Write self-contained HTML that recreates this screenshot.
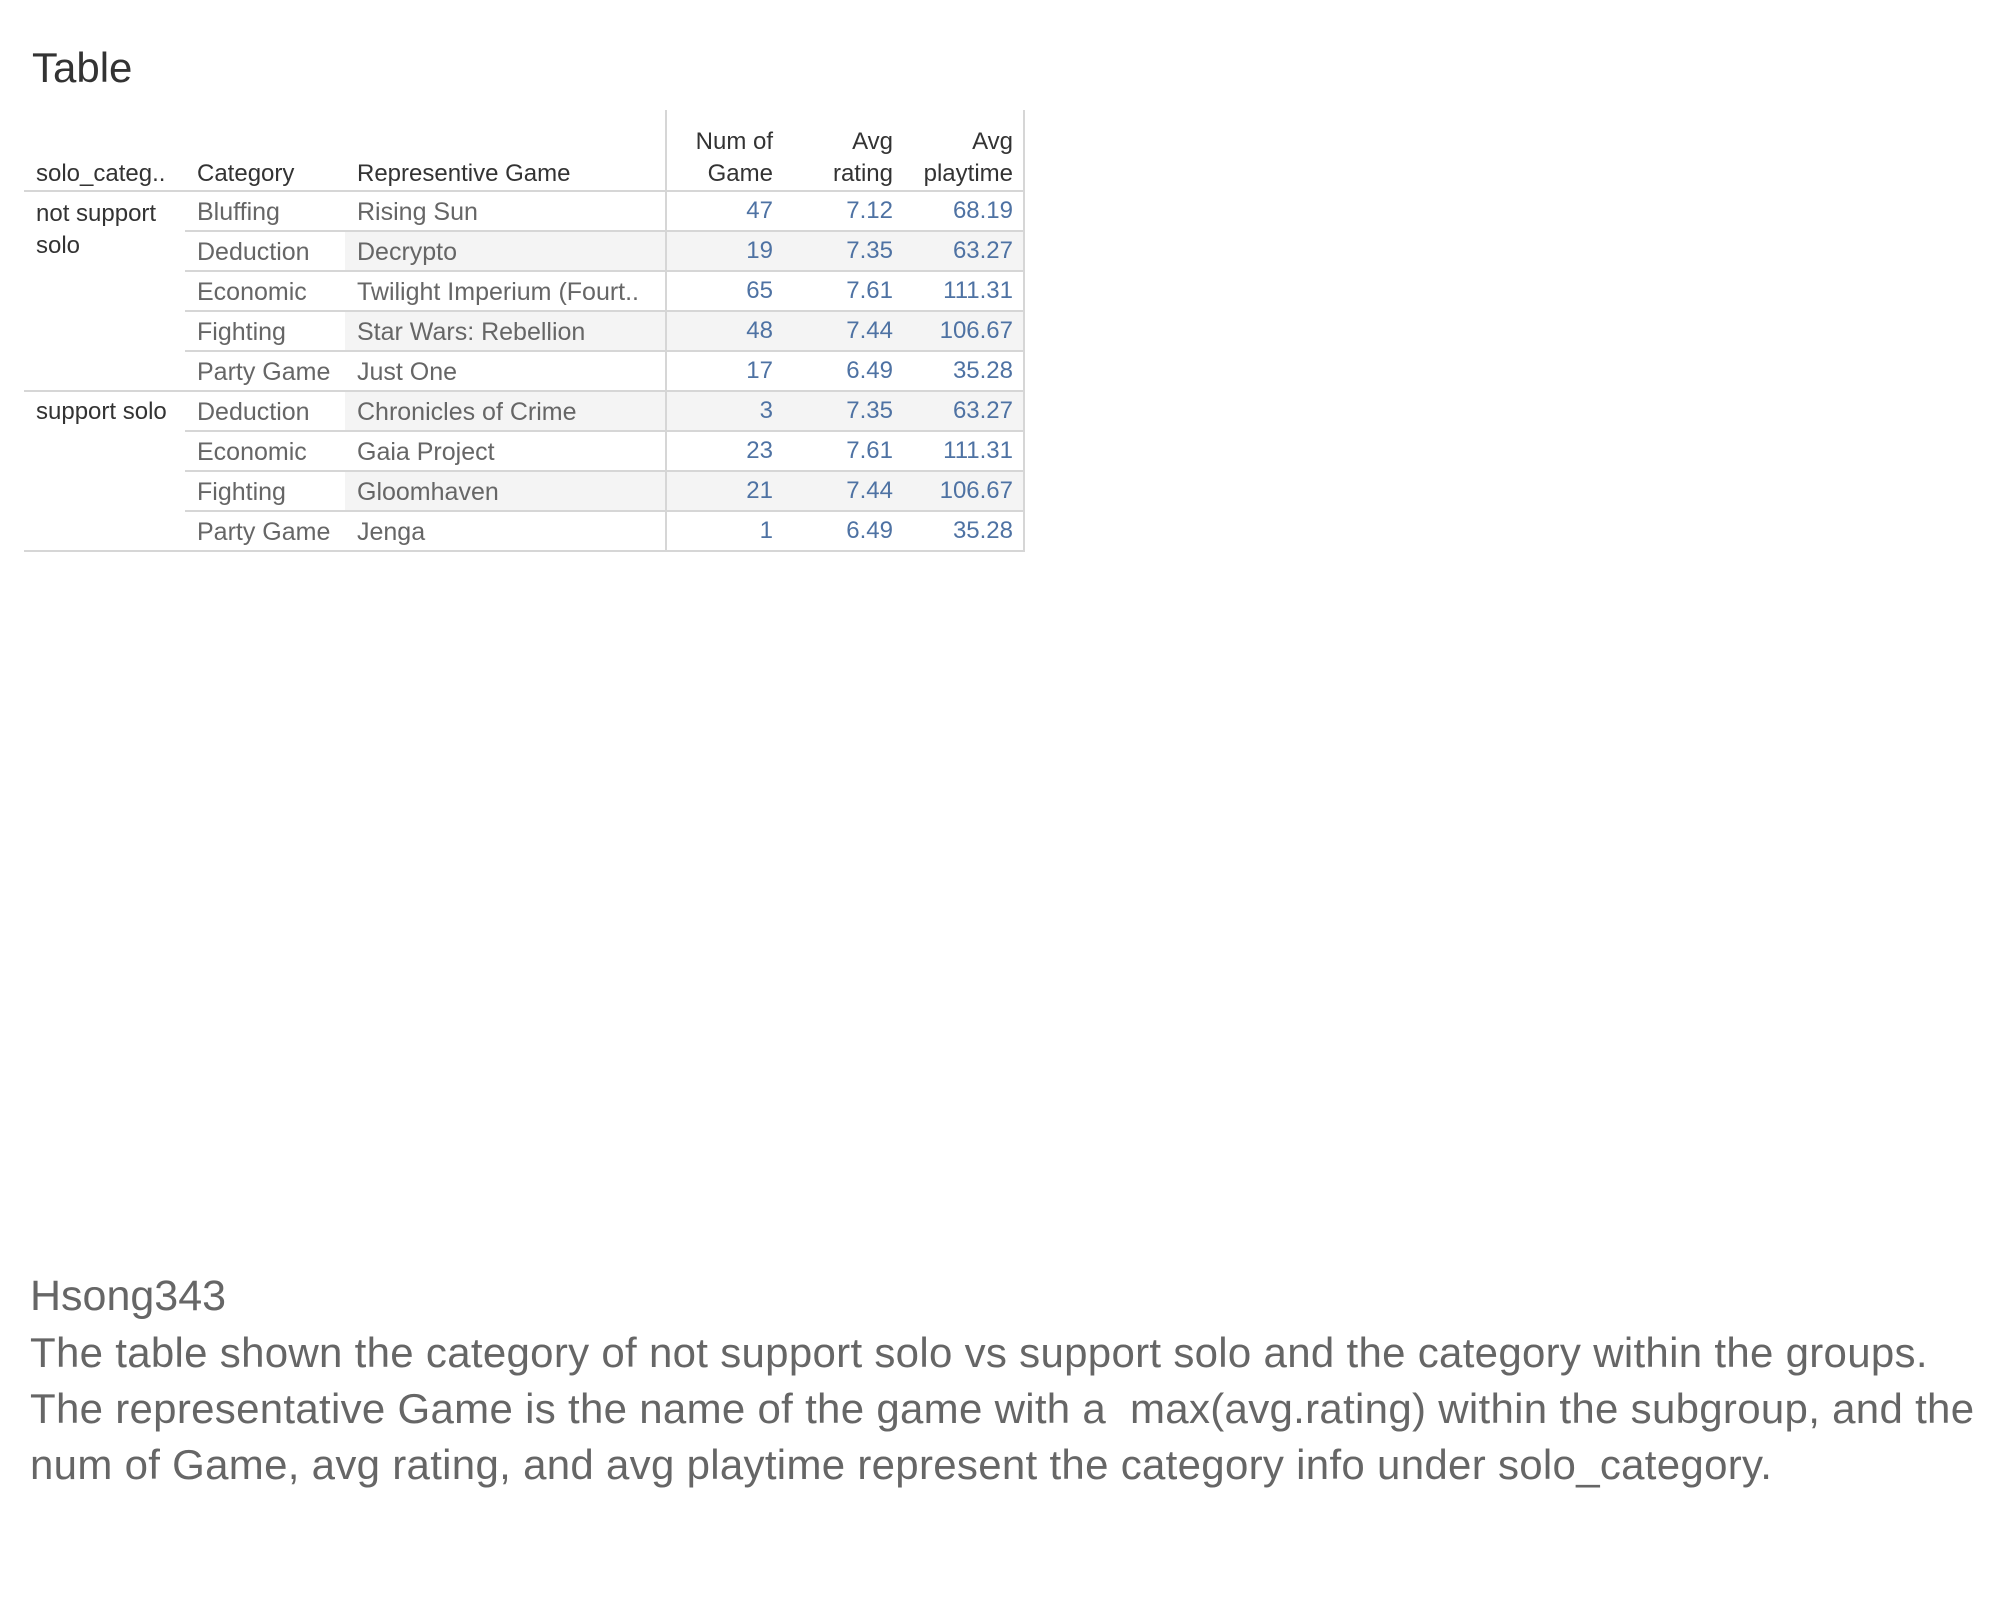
<!DOCTYPE html>
<html><head><meta charset="utf-8"><style>
body{margin:0;width:2000px;height:1600px;background:#fff;position:relative;font-family:"Liberation Sans",sans-serif;overflow:hidden}
.a{position:absolute;white-space:nowrap}
.t{font-size:24px;line-height:24px}
.h{color:#333}
.c{color:#666;font-size:25px}
.n{color:#4e72a3;text-align:right}
.hl{position:absolute;height:2px;background:#d6d6d6}
.vl{position:absolute;width:2px;background:#d6d6d6}
.sh{position:absolute;background:#f4f4f4}
</style></head><body>
<div class="a" style="left:32px;top:44px;font-size:42px;color:#333">Table</div>

<div class="sh" style="left:345px;top:232px;width:320px;height:38px"></div>
<div class="sh" style="left:667px;top:232px;width:357px;height:38px"></div>
<div class="sh" style="left:345px;top:312px;width:320px;height:38px"></div>
<div class="sh" style="left:667px;top:312px;width:357px;height:38px"></div>
<div class="sh" style="left:345px;top:392px;width:320px;height:38px"></div>
<div class="sh" style="left:667px;top:392px;width:357px;height:38px"></div>
<div class="sh" style="left:345px;top:472px;width:320px;height:38px"></div>
<div class="sh" style="left:667px;top:472px;width:357px;height:38px"></div>

<div class="vl" style="left:665px;top:110px;height:442px"></div>
<div class="vl" style="left:1023px;top:110px;height:442px"></div>
<div class="hl" style="left:24px;top:190px;width:1001px"></div>
<div class="hl" style="left:185px;top:230px;width:840px"></div>
<div class="hl" style="left:185px;top:270px;width:840px"></div>
<div class="hl" style="left:185px;top:310px;width:840px"></div>
<div class="hl" style="left:185px;top:350px;width:840px"></div>
<div class="hl" style="left:24px;top:390px;width:1001px"></div>
<div class="hl" style="left:185px;top:430px;width:840px"></div>
<div class="hl" style="left:185px;top:470px;width:840px"></div>
<div class="hl" style="left:185px;top:510px;width:840px"></div>
<div class="hl" style="left:24px;top:550px;width:1001px"></div>

<div class="a t h" style="left:36px;top:162px">solo_categ..</div>
<div class="a t h" style="left:197px;top:162px">Category</div>
<div class="a t h" style="left:357px;top:162px">Representive Game</div>

<div class="a t h" style="left:690px;top:126px;width:83px;text-align:right;line-height:32px">Num of<br>Game</div>
<div class="a t h" style="left:800px;top:126px;width:93px;text-align:right;line-height:32px">Avg<br>rating</div>
<div class="a t h" style="left:900px;top:126px;width:113px;text-align:right;line-height:32px">Avg<br>playtime</div>

<div class="a t h" style="left:36px;top:198px;line-height:32px">not support<br>solo</div>
<div class="a t h" style="left:36px;top:400px">support solo</div>

<div class="a t c" style="left:197px;top:200px">Bluffing</div>
<div class="a t c" style="left:357px;top:200px">Rising Sun</div>
<div class="a t n" style="left:700px;top:199px;width:73px">47</div>
<div class="a t n" style="left:800px;top:199px;width:93px">7.12</div>
<div class="a t n" style="left:900px;top:199px;width:113px">68.19</div>

<div class="a t c" style="left:197px;top:240px">Deduction</div>
<div class="a t c" style="left:357px;top:240px">Decrypto</div>
<div class="a t n" style="left:700px;top:239px;width:73px">19</div>
<div class="a t n" style="left:800px;top:239px;width:93px">7.35</div>
<div class="a t n" style="left:900px;top:239px;width:113px">63.27</div>

<div class="a t c" style="left:197px;top:280px">Economic</div>
<div class="a t c" style="left:357px;top:280px">Twilight Imperium (Fourt..</div>
<div class="a t n" style="left:700px;top:279px;width:73px">65</div>
<div class="a t n" style="left:800px;top:279px;width:93px">7.61</div>
<div class="a t n" style="left:900px;top:279px;width:113px">111.31</div>

<div class="a t c" style="left:197px;top:320px">Fighting</div>
<div class="a t c" style="left:357px;top:320px">Star Wars: Rebellion</div>
<div class="a t n" style="left:700px;top:319px;width:73px">48</div>
<div class="a t n" style="left:800px;top:319px;width:93px">7.44</div>
<div class="a t n" style="left:900px;top:319px;width:113px">106.67</div>

<div class="a t c" style="left:197px;top:360px">Party Game</div>
<div class="a t c" style="left:357px;top:360px">Just One</div>
<div class="a t n" style="left:700px;top:359px;width:73px">17</div>
<div class="a t n" style="left:800px;top:359px;width:93px">6.49</div>
<div class="a t n" style="left:900px;top:359px;width:113px">35.28</div>

<div class="a t c" style="left:197px;top:400px">Deduction</div>
<div class="a t c" style="left:357px;top:400px">Chronicles of Crime</div>
<div class="a t n" style="left:700px;top:399px;width:73px">3</div>
<div class="a t n" style="left:800px;top:399px;width:93px">7.35</div>
<div class="a t n" style="left:900px;top:399px;width:113px">63.27</div>

<div class="a t c" style="left:197px;top:440px">Economic</div>
<div class="a t c" style="left:357px;top:440px">Gaia Project</div>
<div class="a t n" style="left:700px;top:439px;width:73px">23</div>
<div class="a t n" style="left:800px;top:439px;width:93px">7.61</div>
<div class="a t n" style="left:900px;top:439px;width:113px">111.31</div>

<div class="a t c" style="left:197px;top:480px">Fighting</div>
<div class="a t c" style="left:357px;top:480px">Gloomhaven</div>
<div class="a t n" style="left:700px;top:479px;width:73px">21</div>
<div class="a t n" style="left:800px;top:479px;width:93px">7.44</div>
<div class="a t n" style="left:900px;top:479px;width:113px">106.67</div>

<div class="a t c" style="left:197px;top:520px">Party Game</div>
<div class="a t c" style="left:357px;top:520px">Jenga</div>
<div class="a t n" style="left:700px;top:519px;width:73px">1</div>
<div class="a t n" style="left:800px;top:519px;width:93px">6.49</div>
<div class="a t n" style="left:900px;top:519px;width:113px">35.28</div>

<div class="a" style="left:30px;top:1272px;font-size:43px;color:#666">Hsong343</div>
<div class="a" style="left:30px;top:1325px;font-size:42px;letter-spacing:0.3px;line-height:56px;color:#666">The table shown the category of not support solo vs support solo and the category within the groups.<br>The representative Game is the name of the game with a&nbsp; max(avg.rating) within the subgroup, and the<br>num of Game, avg rating, and avg playtime represent the category info under solo_category.</div>
</body></html>
